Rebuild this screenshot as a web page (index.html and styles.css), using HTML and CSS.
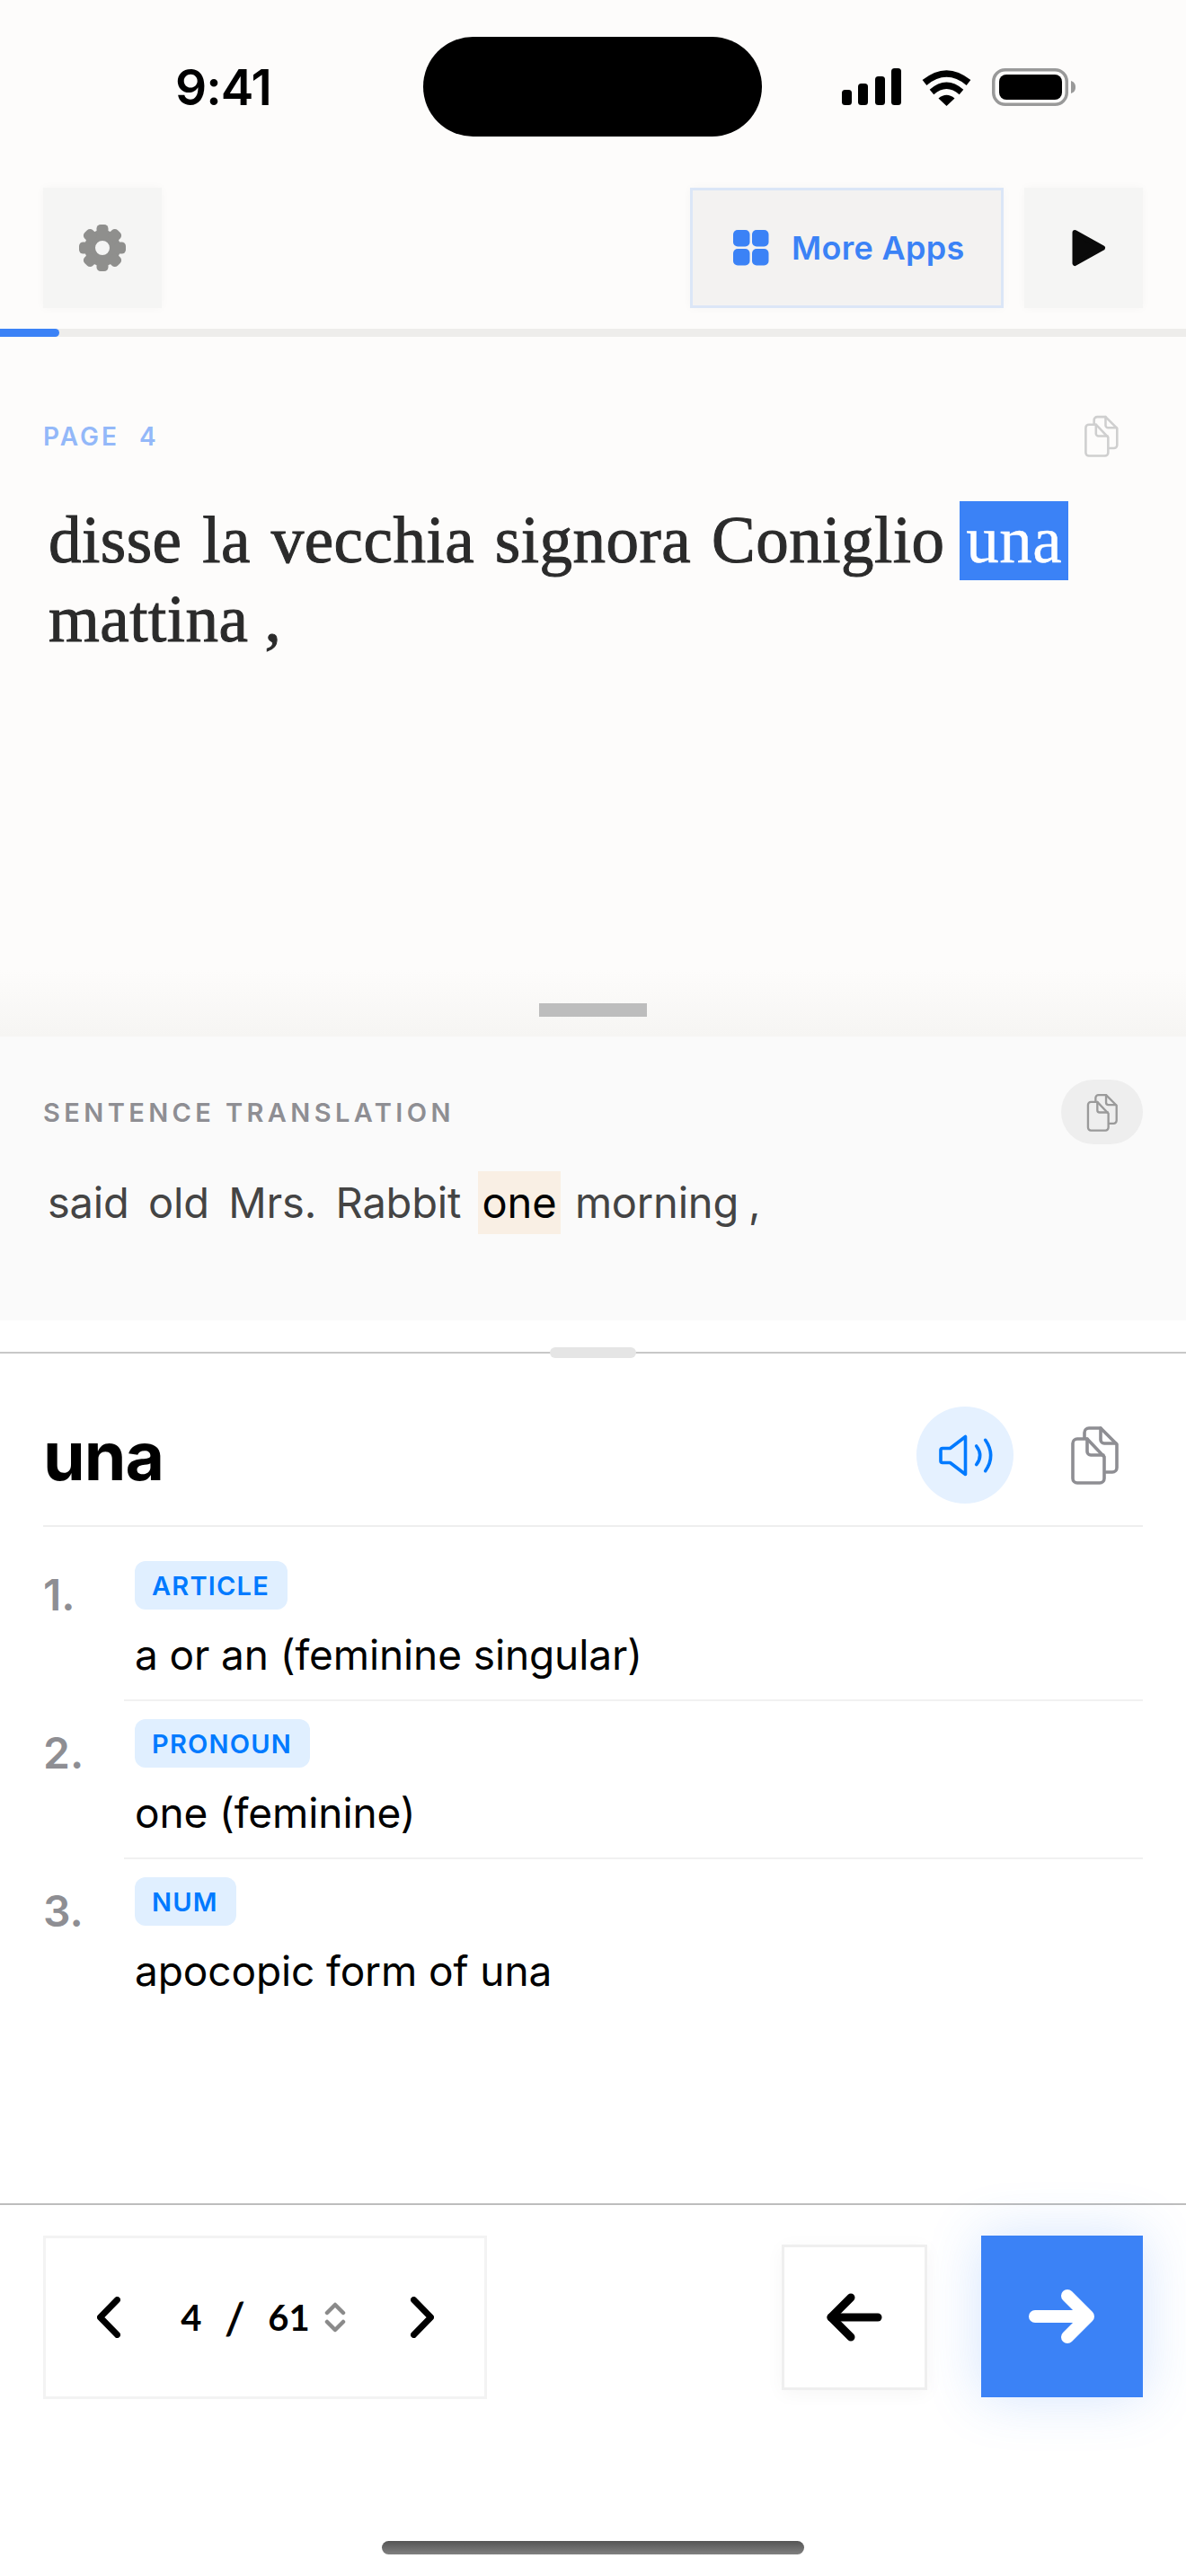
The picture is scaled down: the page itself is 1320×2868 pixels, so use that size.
FILE: index.html
```html
<!DOCTYPE html>
<html lang="en">
<head>
    <meta charset="UTF-8" />
    <meta name="viewport" content="width=device-width, initial-scale=1.0"/>
    <title>Reader</title>
    <link rel="stylesheet" href="styles.css">
</head>
<body>

<svg class="defs" width="0" height="0">
    <symbol id="copy" viewBox="0 0 54 66">
        <g fill="none" stroke="currentColor" stroke-width="3.6" stroke-linejoin="round" stroke-linecap="round">
            <path d="M8 15H19L38 35V59a5 5 0 0 1-5 5H8a5 5 0 0 1-5-5V20a5 5 0 0 1 5-5z"/>
            <path d="M19 15V29a4 4 0 0 0 4 4H37"/>
            <path d="M16 14V8a5 5 0 0 1 5-5H34L52 21V47a5 5 0 0 1-5 5H40"/>
            <path d="M34 3V16a4 4 0 0 0 4 4H51"/>
        </g>
    </symbol>
</svg>

<div class="top">
    <div class="status">
        <div class="time">9:41</div>
        <div class="island"></div>
        <div class="status-icons">
            <svg width="66" height="42" viewBox="0 0 66 42">
                <rect x="0" y="24" width="11" height="17" rx="3.5"/>
                <rect x="18" y="17" width="11" height="24" rx="3.5"/>
                <rect x="37" y="9" width="11" height="32" rx="3.5"/>
                <rect x="55" y="0" width="11" height="41" rx="3.5"/>
            </svg>
            <svg width="57" height="42" viewBox="0 0 57 42">
                <path d="M4 16Q28.5 -4 53 16" fill="none" stroke="#000" stroke-width="7.5"/>
                <path d="M12 26.5Q28.5 12 45 26.5" fill="none" stroke="#000" stroke-width="7"/>
                <path d="M19.5 33.5Q28.5 26 37.5 33.5L28.5 42z"/>
            </svg>
            <svg width="93" height="42" viewBox="0 0 93 42">
                <rect x="1.75" y="1.75" width="81.5" height="38.5" rx="13" fill="none" stroke="#999" stroke-width="3.5"/>
                <rect x="8" y="7" width="70" height="28" rx="8"/>
                <path d="M88 14c3 1 5 3 5 7s-2 6-5 7z" fill="#999"/>
            </svg>
        </div>
    </div>

    <div class="toolbar">
        <button class="tool-btn">
            <svg width="52" height="52" viewBox="0 0 52 52" fill="#8f8f8d">
                <circle cx="26" cy="26" r="14" fill="none" stroke="#8f8f8d" stroke-width="12"/>
                <rect x="19.5" y="0" width="13" height="13" rx="4.5"/>
                <rect x="19.5" y="0" width="13" height="13" rx="4.5" transform="rotate(45 26 26)"/>
                <rect x="19.5" y="0" width="13" height="13" rx="4.5" transform="rotate(90 26 26)"/>
                <rect x="19.5" y="0" width="13" height="13" rx="4.5" transform="rotate(135 26 26)"/>
                <rect x="19.5" y="0" width="13" height="13" rx="4.5" transform="rotate(180 26 26)"/>
                <rect x="19.5" y="0" width="13" height="13" rx="4.5" transform="rotate(225 26 26)"/>
                <rect x="19.5" y="0" width="13" height="13" rx="4.5" transform="rotate(270 26 26)"/>
                <rect x="19.5" y="0" width="13" height="13" rx="4.5" transform="rotate(315 26 26)"/>
            </svg>
        </button>
        <button class="apps-btn">
            <svg width="40" height="40" viewBox="0 0 40 40" fill="#3b82f6">
                <rect x="0" y="0" width="18.5" height="18.5" rx="5"/>
                <rect x="21" y="0" width="18.5" height="18.5" rx="5"/>
                <rect x="0" y="21" width="18.5" height="18.5" rx="5"/>
                <rect x="21" y="21" width="18.5" height="18.5" rx="5"/>
            </svg>
            <span>More Apps</span>
        </button>
        <button class="tool-btn">
            <svg class="play" width="38" height="42" viewBox="0 0 38 42">
                <path d="M3.5 4L34 21L3.5 38z" fill="#0a0a0a" stroke="#0a0a0a" stroke-width="6" stroke-linejoin="round"/>
            </svg>
        </button>
    </div>

    <div class="progress"><div class="progress-fill"></div></div>

    <div class="reading">
        <div class="row-head">
            <span class="page-label">PAGE <span class="page-no">4</span></span>
            <svg class="copy-faint"><use href="#copy"/></svg>
        </div>
        <p class="sentence">disse la vecchia signora Coniglio <span class="hl">una</span><br>mattina<span class="comma">,</span></p>
        <div class="fade"><div class="grip"></div></div>
    </div>

    <div class="translation">
        <div class="row-head">
            <span class="trans-label">SENTENCE TRANSLATION</span>
            <button class="copy-pill"><svg class="copy-mid"><use href="#copy"/></svg></button>
        </div>
        <p class="trans-text">said old Mrs. Rabbit <span class="hl-soft">one</span> morning<span class="comma">,</span></p>
    </div>
</div>

<div class="sheet">
    <div class="sheet-grip"></div>
    <div class="word-head">
        <h2 class="word">una</h2>
        <button class="sound">
            <svg width="108" height="108" viewBox="0 0 108 108" fill="none" stroke="#007aff" stroke-width="3.6" stroke-linecap="round" stroke-linejoin="round">
                <path d="M29 46.5H37.5L54.5 33.5V75.5L37.5 62.5H29a2 2 0 0 1-2-2V48.5a2 2 0 0 1 2-2z"/>
                <path d="M66.7 44Q74.7 54.4 66.7 64.7"/>
                <path d="M76.7 37.3Q88.7 54.5 76.7 71.7"/>
            </svg>
        </button>
        <svg class="copy-big"><use href="#copy"/></svg>
    </div>

    <ol class="defs-list">
        <li class="def">
            <div class="num">1.</div>
            <div class="def-body">
                <span class="tag">ARTICLE</span>
                <p class="def-text">a or an (feminine singular)</p>
            </div>
        </li>
        <li class="def">
            <div class="num">2.</div>
            <div class="def-body">
                <span class="tag">PRONOUN</span>
                <p class="def-text">one (feminine)</p>
            </div>
        </li>
        <li class="def last">
            <div class="num">3.</div>
            <div class="def-body">
                <span class="tag">NUM</span>
                <p class="def-text">apocopic form of una</p>
            </div>
        </li>
    </ol>
</div>

<div class="footer">
    <div class="pager">
        <svg width="26" height="46" viewBox="0 0 26 46" fill="none" stroke="#000" stroke-width="7" stroke-linecap="round" stroke-linejoin="round">
            <path d="M22.5 3.5L3.5 23L22.5 42.5"/>
        </svg>
        <div class="pager-text">
            <span>4</span><span class="slash">/</span><span>61</span>
            <svg class="updown" width="24" height="34" viewBox="0 0 24 34" fill="none" stroke="#8a8a8a" stroke-width="4.5" stroke-linecap="round" stroke-linejoin="round">
                <path d="M3 12L12 3L21 12"/>
                <path d="M3 22L12 31L21 22"/>
            </svg>
        </div>
        <svg width="26" height="46" viewBox="0 0 26 46" fill="none" stroke="#000" stroke-width="7" stroke-linecap="round" stroke-linejoin="round">
            <path d="M3.5 3.5L22.5 23L3.5 42.5"/>
        </svg>
    </div>
    <button class="back-btn">
        <svg width="64" height="54" viewBox="0 0 64 54" fill="none" stroke="#000" stroke-width="9" stroke-linecap="round" stroke-linejoin="round">
            <path d="M58 27H6"/>
            <path d="M28 5L6 27L28 49"/>
        </svg>
    </button>
    <button class="next-btn">
        <svg width="74" height="62" viewBox="0 0 74 62" fill="none" stroke="#fff" stroke-width="14" stroke-linecap="round" stroke-linejoin="round">
            <path d="M7 31H65"/>
            <path d="M43 8L66 31L43 54"/>
        </svg>
    </button>
</div>

<div class="home-bar"></div>

</body>
</html>
```
FILE: styles.css
```css
* {
    box-sizing: border-box;
}
html, body {
    margin: 0;
    padding: 0;
}
body {
    width: 1320px;
    height: 2868px;
    overflow: hidden;
    background: #fff;
    font-family: Inter, "Liberation Sans", sans-serif;
    display: flex;
    flex-direction: column;
}
p, h2, ol {
    margin: 0;
    padding: 0;
}
button {
    border: 0;
    padding: 0;
    font: inherit;
    display: flex;
    align-items: center;
    justify-content: center;
}
.defs {
    position: absolute;
}

/* top part: status bar, toolbar, reading area */
.top {
    background: #fdfcfb;
}
.status {
    height: 193px;
    display: grid;
    grid-template-columns: 471px 377px 1fr;
    align-items: center;
}
.time {
    padding-left: 195px;
    font-size: 55px;
    font-weight: 600;
    letter-spacing: -1px;
    color: #000;
}
.island {
    height: 111px;
    background: #000;
    border-radius: 56px;
}
.status-icons {
    padding-left: 89px;
    display: flex;
    gap: 22px;
}
.toolbar {
    display: flex;
    justify-content: flex-end;
    gap: 23px;
    padding: 16px 48px 23px;
}
.tool-btn {
    width: 132px;
    height: 134px;
    background: #f5f5f4;
    box-shadow: 0 0 10px rgba(0, 0, 0, 0.03);
}
.tool-btn:first-child {
    margin-right: auto;
}
.play {
    margin-left: 12px;
}
.apps-btn {
    width: 349px;
    height: 134px;
    gap: 25px;
    justify-content: flex-start;
    padding-left: 45px;
    background: #f3f2f1;
    border: 3px solid #dbe6f7;
    color: #3b82f6;
    font-size: 36px;
    font-weight: 600;
    letter-spacing: 0.3px;
    box-shadow: 0 0 10px rgba(0, 0, 0, 0.03);
}
.progress {
    height: 9px;
    background: #eeedeb;
}
.progress-fill {
    width: 66px;
    height: 9px;
    background: #3b82f6;
    border-radius: 0 5px 5px 0;
}

.reading {
    height: 779px;
    display: flex;
    flex-direction: column;
    padding-top: 87px;
}
.row-head {
    display: flex;
    align-items: center;
    justify-content: space-between;
    padding: 0 48px;
}
.page-label {
    font-size: 28px;
    font-weight: 600;
    color: #93b8f9;
    letter-spacing: 3px;
}
.page-no {
    margin-left: 12px;
}
.copy-faint {
    width: 39px;
    height: 47px;
    margin-right: 27px;
    color: #cfcfcf;
}
.sentence {
    margin-top: 49px;
    padding-left: 54px;
    font-family: "Liberation Serif", serif;
    font-size: 73px;
    line-height: 88px;
    letter-spacing: 0.5px;
    word-spacing: 4px;
    color: #2b2b2b;
    -webkit-text-stroke: 1px #2b2b2b;
}
.sentence .comma {
    margin-left: 18px;
}
.hl {
    display: inline-block;
    margin-left: -6px;
    padding: 0 7px;
    background: #3b82f6;
    color: #fff;
    -webkit-text-stroke: 0.4px #fff;
}
.fade {
    margin-top: auto;
    height: 74px;
    padding-top: 37px;
    background: linear-gradient(#fdfcfb, #f6f5f3);
}
.grip {
    width: 120px;
    height: 15px;
    margin: 0 auto;
    background: #bdbdbd;
}

.translation {
    height: 316px;
    padding-top: 48px;
    background: #fafafa;
}
.trans-label {
    font-size: 29px;
    font-weight: 600;
    color: #8e8e93;
    letter-spacing: 4.4px;
}
.copy-pill {
    width: 91px;
    height: 72px;
    border-radius: 36px;
    background: #eeeeee;
}
.copy-mid {
    width: 35px;
    height: 43px;
    color: #9a9a9a;
}
.trans-text {
    margin-top: 30px;
    padding-left: 53px;
    font-size: 47px;
    line-height: 70px;
    letter-spacing: -0.2px;
    word-spacing: 8.5px;
    color: #444;
}
.trans-text .comma {
    margin-left: 11px;
}
.hl-soft {
    display: inline-block;
    margin: 0 -6px 0 -3px;
    padding: 0 5px;
    background: #f9efe4;
    color: #000;
}

/* dictionary sheet */
.sheet {
    position: relative;
    margin-top: 35px;
    border-top: 2px solid #c8c8c8;
    flex: 1;
}
.sheet-grip {
    position: absolute;
    top: -7px;
    left: 612px;
    width: 96px;
    height: 12px;
    border-radius: 6px;
    background: #e5e5e5;
}
.word-head {
    display: flex;
    align-items: center;
    margin: 59px 48px 0;
    padding-bottom: 24px;
    border-bottom: 2px solid #eeeeee;
}
.word {
    font-size: 75px;
    font-weight: 700;
    letter-spacing: -1px;
    color: #000;
    margin-right: auto;
}
.sound {
    width: 108px;
    height: 108px;
    border-radius: 50%;
    background: #e5f1ff;
}
.copy-big {
    width: 54px;
    height: 66px;
    margin: 0 27px 0 63px;
    color: #8e8e93;
}
.defs-list {
    list-style: none;
    margin-top: 18px;
}
.def {
    display: flex;
    padding-left: 48px;
}
.num {
    width: 90px;
    padding-top: 29px;
    font-size: 48px;
    line-height: 58px;
    font-weight: 600;
    color: #8e8e93;
}
.def-body {
    flex: 1;
    margin-right: 48px;
    padding: 20px 0 20px 12px;
    border-bottom: 2px solid #f1f1f1;
}
.last .def-body {
    border-bottom: 0;
}
.tag {
    display: block;
    width: fit-content;
    height: 54px;
    padding: 0 20px 0 19px;
    border-radius: 12px;
    background: #e0efff;
    color: #007aff;
    font-size: 29px;
    line-height: 56px;
    font-weight: 600;
    letter-spacing: 1.2px;
}
.def-text {
    margin-top: 20px;
    font-size: 46px;
    line-height: 60px;
    letter-spacing: -0.1px;
    color: #000;
}

/* bottom bar */
.footer {
    height: 415px;
    padding: 34px 48px 0;
    border-top: 2px solid #bdbdbd;
    display: flex;
    align-items: flex-start;
    gap: 60px;
}
.pager {
    width: 494px;
    height: 182px;
    margin-right: auto;
    padding: 0 56px 0 57px;
    background: #fff;
    border: 3px solid #f3f3f3;
    display: flex;
    align-items: center;
    justify-content: space-between;
}
.pager-text {
    display: flex;
    align-items: center;
    margin-right: 5px;
    font-family: Lato, sans-serif;
    font-size: 40px;
    font-weight: 700;
    color: #000;
}
.slash {
    margin: 0 26px;
    font-size: 48px;
    font-weight: 400;
    -webkit-text-stroke: 1px #000;
}
.updown {
    margin-left: 16px;
}
.back-btn {
    width: 162px;
    height: 162px;
    margin-top: 10px;
    background: #fff;
    border: 3px solid #efefef;
    box-shadow: 0 4px 20px rgba(0, 0, 0, 0.04);
}
.next-btn {
    width: 180px;
    height: 180px;
    background: #3b82f6;
    box-shadow: 0 0 60px rgba(59, 130, 246, 0.22);
}
.home-bar {
    position: absolute;
    left: 425px;
    top: 2829px;
    width: 470px;
    height: 15px;
    border-radius: 8px;
    background: linear-gradient(#555, #808080);
}
```
